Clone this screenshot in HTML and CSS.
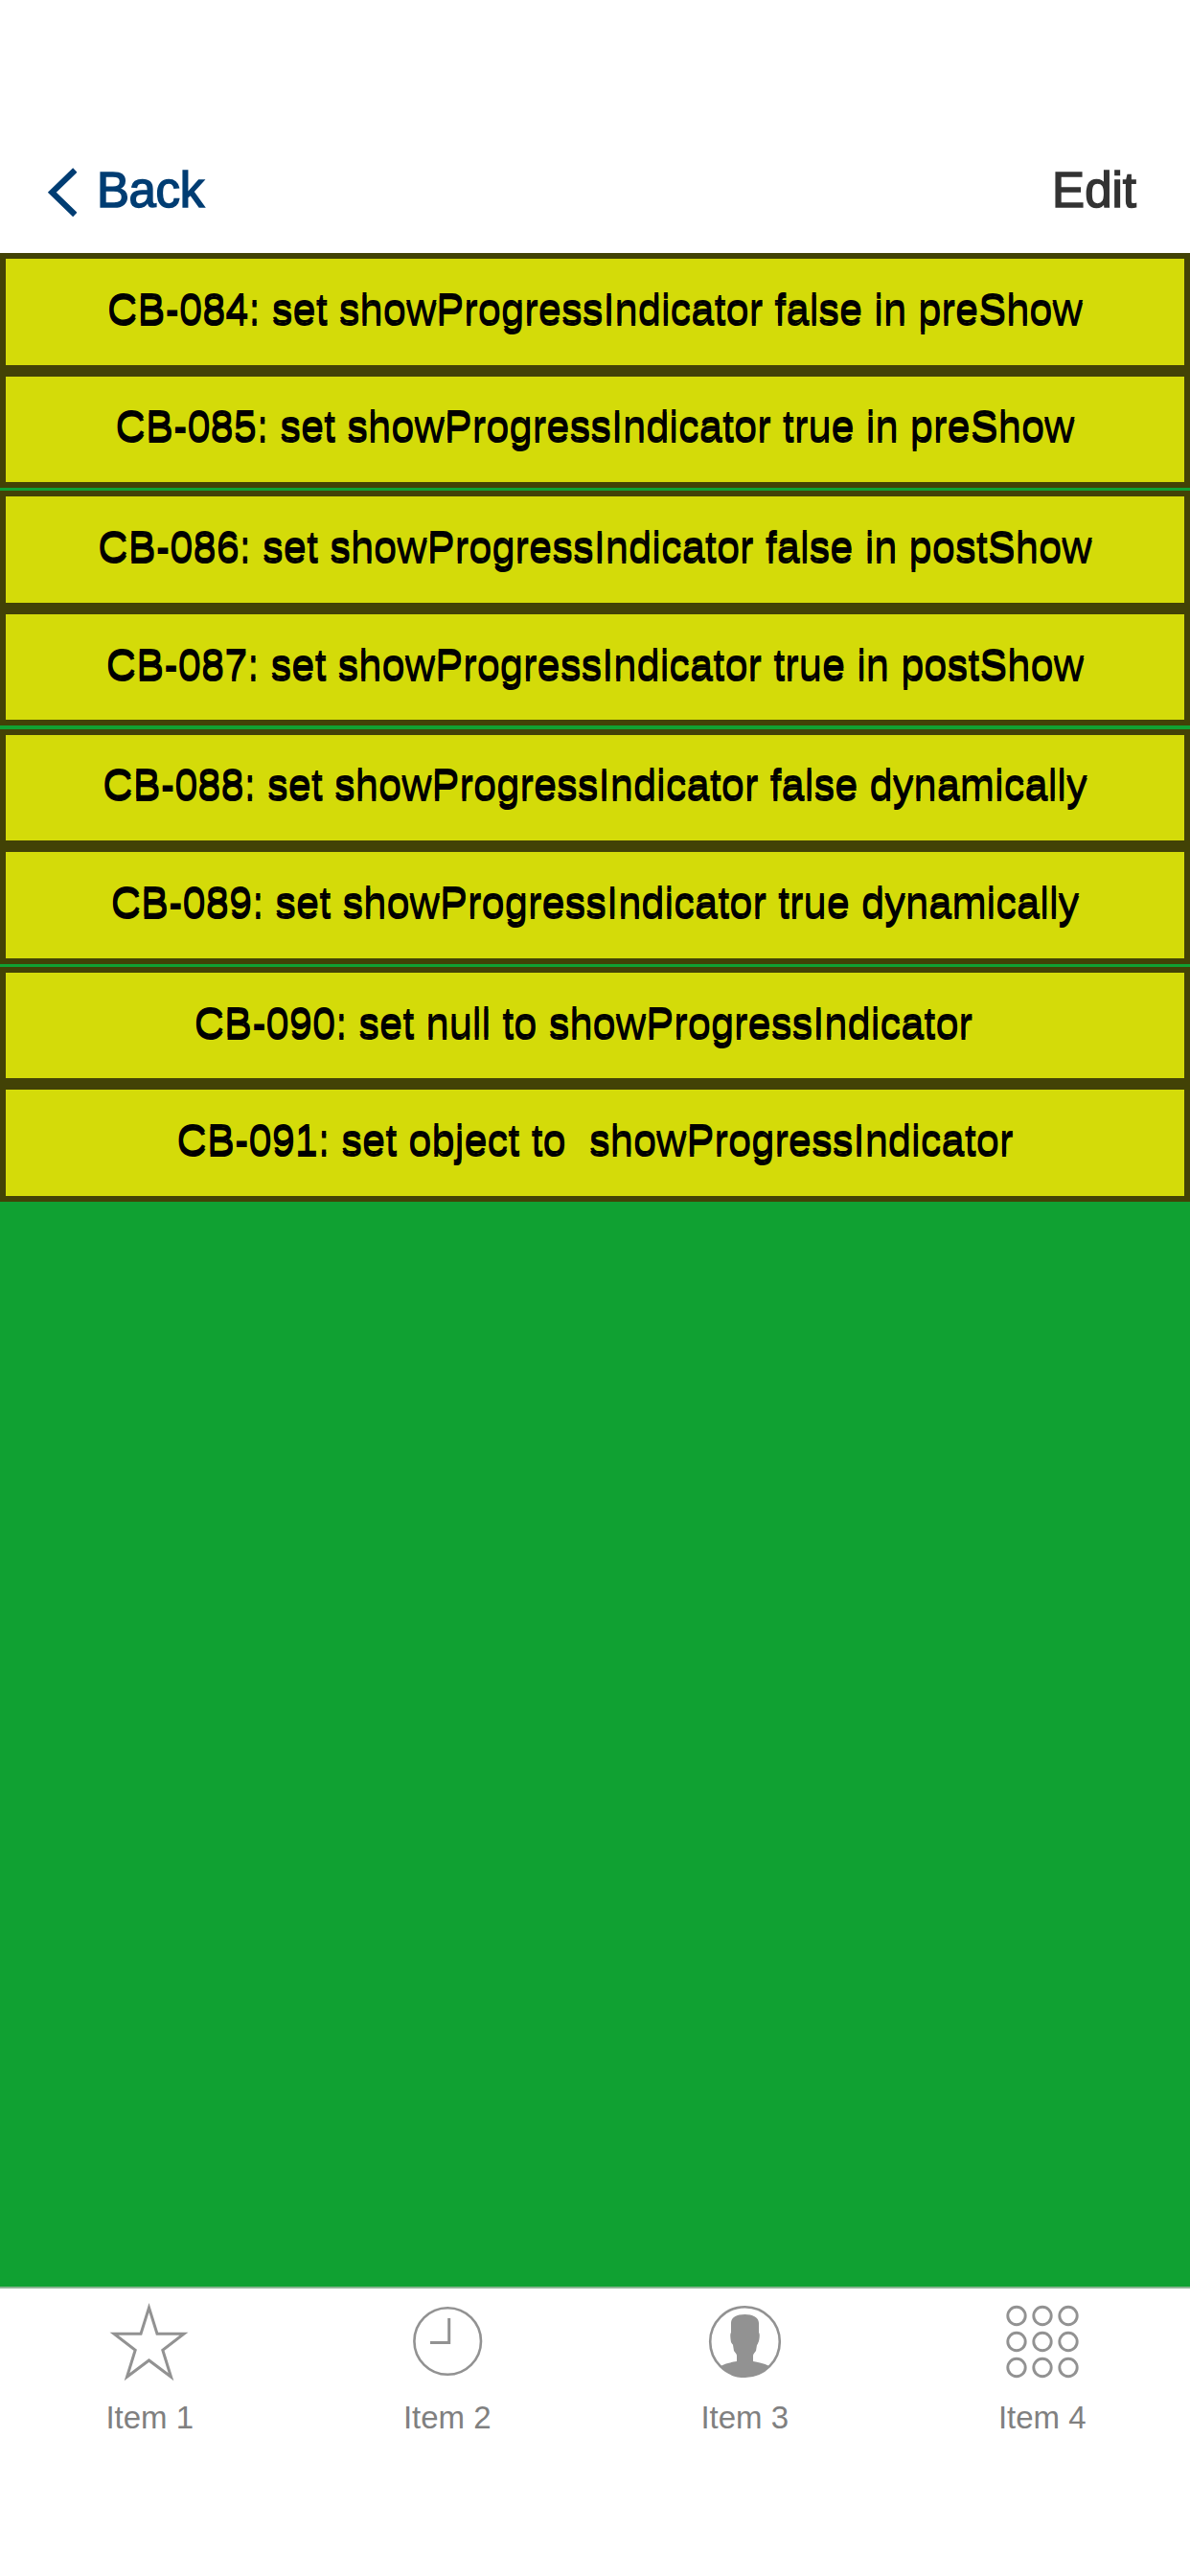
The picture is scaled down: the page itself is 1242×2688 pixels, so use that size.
FILE: index.html
```html
<!DOCTYPE html>
<html lang="en">
<head>
<meta charset="utf-8">
<title>Progress indicator</title>
<link rel="stylesheet" href="styles.css">
</head>
<body>
<header class="header">
  <a class="back"><svg class="chevron" width="32" height="54" viewBox="0 0 32 54"><path d="M30.3 3.5 6.3 26.8 30.3 50" fill="none" stroke="currentColor" stroke-width="6.2"/></svg><span>Back</span></a>
  <a class="edit">Edit</a>
</header>
<main class="content">
  <div class="group"><button class="row">CB-084: set showProgressIndicator false in preShow</button><button class="row short raised">CB-085: set showProgressIndicator true in preShow</button></div>
  <div class="group"><button class="row">CB-086: set showProgressIndicator false in postShow</button><button class="row short">CB-087: set showProgressIndicator true in postShow</button></div>
  <div class="group shifted"><button class="row short raised">CB-088: set showProgressIndicator false dynamically</button><button class="row">CB-089: set showProgressIndicator true dynamically</button></div>
  <div class="group"><button class="row short">CB-090: set null to showProgressIndicator&nbsp;&nbsp;</button><button class="row">CB-091: set object to&nbsp; showProgressIndicator</button></div>
</main>
<footer class="tabs">
  <a class="tab"><svg class="icon" width="90" height="90" viewBox="0 0 90 90"><path d="M45.5 10 54 37.3H82L59.8 54.3 68.5 82.3 45.5 65 22.5 82.3 31.2 54.3 9 37.3H37Z" fill="none" stroke="currentColor" stroke-width="3"/></svg><span>Item 1</span></a>
  <a class="tab"><svg class="icon" width="90" height="90" viewBox="0 0 90 90"><g fill="none" stroke="currentColor"><circle cx="46.2" cy="45" r="34.8" stroke-width="2.6"/><path d="M47.7 21V46.5H28" stroke-width="3"/></g></svg><span>Item 2</span></a>
  <a class="tab"><svg class="icon" width="90" height="90" viewBox="0 0 90 90"><circle cx="46.5" cy="45.5" r="36.3" fill="none" stroke="currentColor" stroke-width="2.6"/><path d="M46.5 17C38 17 32 20 32 26L32 36C31 37 31 40 32 46C33 48 34 48 34 49L35 55C36 57 38 58 38 60V66C32 67 26 68 21 71C34 86 58 86 72 71C66 68 60 67 55 66V60C55 58 57 57 58 55L59 49C60 48 60 47 61 45C62 40 62 37 61 36V26C61 20 54 17 46.5 17Z" fill="currentColor"/></svg><span>Item 3</span></a>
  <a class="tab"><svg class="icon" width="90" height="90" viewBox="0 0 90 90"><g fill="none" stroke="currentColor" stroke-width="2.9"><circle cx="19" cy="18.5" r="9.2"/><circle cx="46" cy="18.5" r="9.2"/><circle cx="73" cy="18.5" r="9.2"/><circle cx="19" cy="45.5" r="9.2"/><circle cx="46" cy="45.5" r="9.2"/><circle cx="73" cy="45.5" r="9.2"/><circle cx="19" cy="72.5" r="9.2"/><circle cx="46" cy="72.5" r="9.2"/><circle cx="73" cy="72.5" r="9.2"/></g></svg><span>Item 4</span></a>
</footer>
</body>
</html>
```
FILE: styles.css
```css
* { box-sizing: border-box; }

body {
  margin: 0;
  height: 2688px;
  display: flex;
  flex-direction: column;
  background: #fff;
  font-family: "Liberation Sans", Arial, sans-serif;
}

.header {
  height: 264px;
  padding: 133px 56px 0 48px;
  display: flex;
  justify-content: space-between;
  align-items: center;
  font-size: 51px;
  line-height: 60px;
  color: #333;
  -webkit-text-stroke: 1.5px currentColor;
}

.back { display: flex; align-items: center; gap: 21px; color: #003d73; letter-spacing: -0.4px; }
.chevron { margin-top: 5px; }

.content {
  flex: 1;
  display: flex;
  flex-direction: column;
  gap: 3px;
  background: #10a132;
}

.group { display: flex; flex-direction: column; }
.shifted { margin-top: 1px; }

.row {
  height: 123px;
  padding: 0 0 7px;
  border: 6px solid #424206;
  background: #d4db09;
  color: #000;
  font: 43.5px/60px "Liberation Sans", Arial, sans-serif;
  text-shadow: 0 3px 0 #000;
}
.short { height: 122px; padding-bottom: 6px; }
.raised { padding-bottom: 8px; }

.tabs {
  height: 302px;
  border-top: 2px solid #8cb593;
  display: grid;
  grid-template-columns: repeat(4, 1fr);
}

.tab {
  padding-top: 10px;
  display: flex;
  flex-direction: column;
  align-items: center;
  color: #929292;
}
.tab span { margin-top: 15px; padding-left: 2px; font-size: 33px; line-height: 40px; color: #808080; }
```
